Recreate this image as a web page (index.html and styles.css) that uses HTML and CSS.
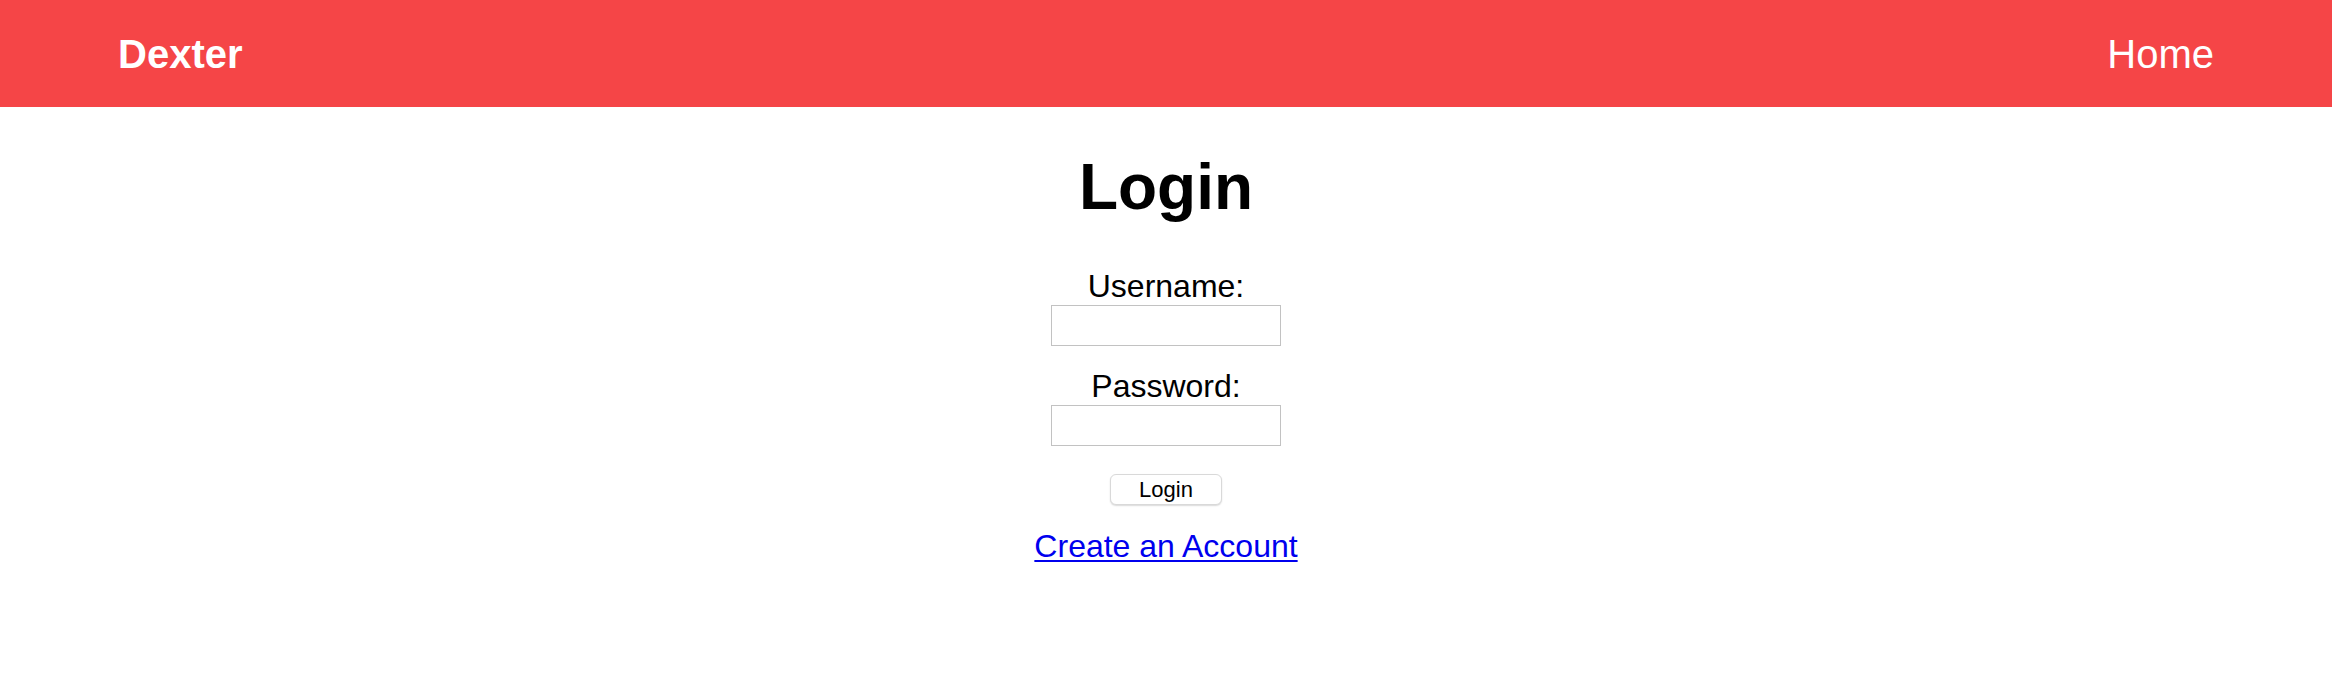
FILE: index.html
```html
<!DOCTYPE html>
<html lang="en">
<head>
<meta charset="utf-8">
<title>Dexter - Login</title>
<link rel="stylesheet" href="styles.css">
</head>
<body>
<header class="topbar">
  <a class="brand" href="#">Dexter</a>
  <a class="nav-link" href="#">Home</a>
</header>
<main class="page">
  <h1 class="title">Login</h1>
  <form class="login-form" onsubmit="return false;">
    <div class="field">
      <label class="field-label" for="username">Username:</label>
      <input class="field-input" type="text" id="username" name="username">
    </div>
    <div class="field">
      <label class="field-label" for="password">Password:</label>
      <input class="field-input" type="password" id="password" name="password">
    </div>
    <button class="submit-btn" type="submit">Login</button>
  </form>
  <a class="create-link" href="#">Create an Account</a>
</main>
</body>
</html>
```
FILE: styles.css
```css
html, body {
  margin: 0;
  padding: 0;
  background: #ffffff;
}

body {
  font-family: "Liberation Sans", Arial, Helvetica, sans-serif;
  color: #000000;
}

.topbar {
  height: 107px;
  background: #f54547;
  display: flex;
  align-items: center;
  justify-content: space-between;
  padding: 0 118px;
}

.brand,
.nav-link {
  color: #ffffff;
  text-decoration: none;
  font-size: 40px;
  line-height: 46px;
}

.brand {
  font-weight: bold;
}

.page {
  display: flex;
  flex-direction: column;
  align-items: center;
}

.title {
  margin: 43px 0 0;
  font-size: 64px;
  line-height: 74px;
  font-weight: bold;
}

.login-form {
  display: flex;
  flex-direction: column;
  align-items: center;
  margin-top: 43px;
}

.field {
  display: flex;
  flex-direction: column;
  align-items: center;
}

.field + .field {
  margin-top: 21px;
}

.field-label {
  font-size: 32px;
  line-height: 38px;
}

.field-input {
  box-sizing: border-box;
  width: 230px;
  height: 41px;
  margin: 0;
  border: 1.5px solid #c2c2c2;
  border-radius: 0;
  padding: 2px 6px;
  font-size: 20px;
  font-family: inherit;
  background: #ffffff;
}

.submit-btn {
  box-sizing: border-box;
  margin-top: 28px;
  width: 112px;
  height: 31px;
  padding: 0;
  border: 1px solid #d9d9d9;
  border-radius: 6px;
  background: #ffffff;
  box-shadow: 0 1px 1.5px rgba(0, 0, 0, 0.15);
  font-family: inherit;
  font-size: 22px;
  line-height: 29px;
  color: #000000;
}

.create-link {
  margin-top: 23px;
  font-size: 32px;
  line-height: 37px;
  color: #0000ee;
  text-decoration: underline;
  text-underline-offset: 3px;
  text-decoration-thickness: 2px;
}
```
